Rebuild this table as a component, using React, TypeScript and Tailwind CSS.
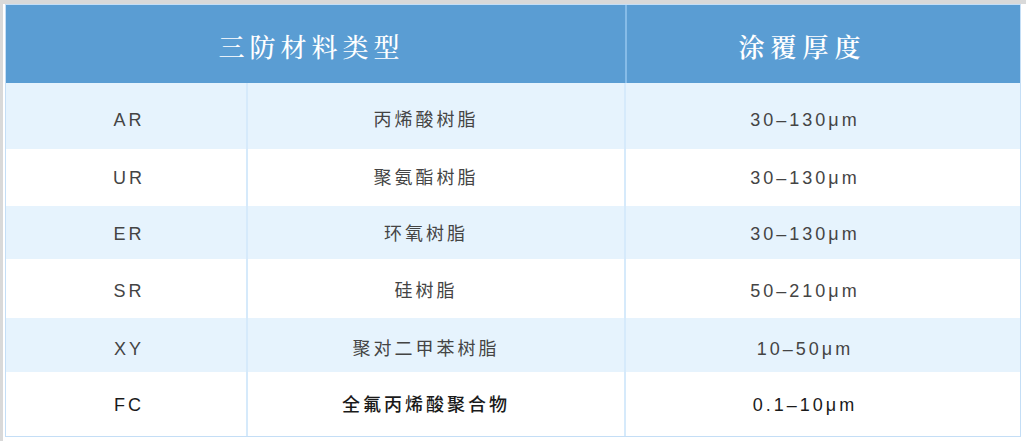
const rows = [
  { code: 'AR', name: '丙烯酸树脂', thick: '30–130μm', h: 'h-[66px]', bg: 'bg-[#e6f3fd]', pt: 'pt-[8px]' },
  { code: 'UR', name: '聚氨酯树脂', thick: '30–130μm', h: 'h-[57px]', bg: 'bg-white', pt: 'pt-[2px]' },
  { code: 'ER', name: '环氧树脂', thick: '30–130μm', h: 'h-[53px]', bg: 'bg-[#e6f3fd]', pt: 'pt-[4px]' },
  { code: 'SR', name: '硅树脂', thick: '50–210μm', h: 'h-[59px]', bg: 'bg-white', pt: 'pt-[6px]' },
  { code: 'XY', name: '聚对二甲苯树脂', thick: '10–50μm', h: 'h-[54px]', bg: 'bg-[#e6f3fd]', pt: 'pt-[8px]' },
  { code: 'FC', name: '全氟丙烯酸聚合物', thick: '0.1–10μm', h: 'h-[64px]', bg: 'bg-white', pt: 'pt-[2px]', bold: true },
];

const body = "font-['Liberation_Sans','Noto_Sans_CJK_SC',sans-serif]";

export default function App() {
  return (
    <div className="h-[441px] w-[1026px] overflow-hidden border-t-[4px] border-l-[3px] border-[#d9d9d9] bg-white">
      <div className="ml-[2px] w-[1016px] border border-[#c4def6]">
        <div className="grid h-[78px] grid-cols-[621px_1fr] bg-[#5a9dd3] text-white">
          <div className="flex items-center justify-center border-r-2 border-[#86bce8] pr-[8px] pt-[2px] font-['Noto_Serif_CJK_SC','Noto_Sans_CJK_SC',serif] text-[26px] font-medium tracking-[5px]">
            三防材料类型
          </div>
          <div className="flex items-center justify-center pr-[42px] pt-[2px] font-['Noto_Serif_CJK_SC','Noto_Sans_CJK_SC',serif] text-[26px] font-semibold tracking-[6px]">
            涂覆厚度
          </div>
        </div>
        {rows.map((r) => (
          <div
            key={r.code}
            className={`grid grid-cols-[242px_378px_1fr] ${r.h} ${r.bg} ${body} text-[18px] tracking-[3px] ${
              r.bold ? 'font-medium text-[#1a1a1a]' : 'text-[#444]'
            }`}
          >
            <div className={`flex items-center justify-center border-r-2 border-[#d6eafb] pl-[6px] ${r.pt}`}>
              {r.code}
            </div>
            <div className={`flex items-center justify-center border-r-2 border-[#d6eafb] pr-[20px] ${r.pt}`}>
              {r.name}
            </div>
            <div className={`flex items-center justify-center pr-[36px] ${r.pt}`}>{r.thick}</div>
          </div>
        ))}
      </div>
    </div>
  );
}
